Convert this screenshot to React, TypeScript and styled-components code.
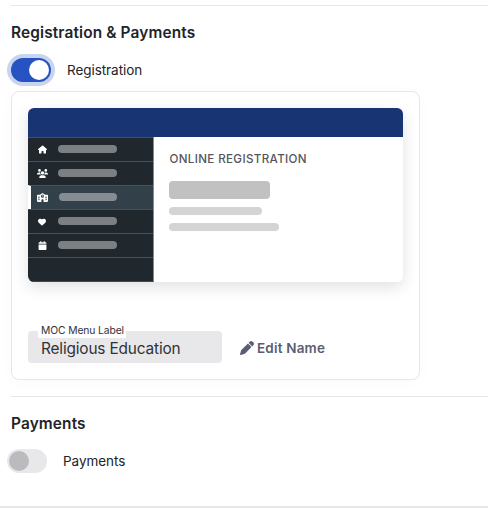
import React from 'react';
import styled, { createGlobalStyle } from 'styled-components';
import { FaHouse, FaUsers, FaSchool, FaHeart, FaCalendar, FaPen } from 'react-icons/fa6';

const GlobalStyle = createGlobalStyle`
  * { box-sizing: border-box; }
  body {
    margin: 0;
    background: #fff;
    color: #212429;
    font-family: Inter, "Liberation Sans", sans-serif;
    overflow: hidden;
  }
`;

const Page = styled.main`
  height: 508px;
  padding-top: 5px;
  overflow: hidden;
  display: flex;
  flex-direction: column;
`;

const Section = styled.section<{ $height: number }>`
  height: ${p => p.$height}px;
  flex: none;
  margin-left: 11px;
  border-top: 1px solid #e7e7e9;
`;

const Heading = styled.h2`
  margin: 16px 0 0;
  font-size: 15.4px;
  line-height: 22px;
  font-weight: 600;
  letter-spacing: 0.14px;
  white-space: nowrap;
`;

const ToggleRow = styled.div<{ $shift?: number }>`
  display: flex;
  align-items: center;
  gap: 16px;
  height: 24px;
  margin: 14px 0 0 ${p => p.$shift ?? 0}px;
`;

const ToggleLabel = styled.span`
  height: 24px;
  font-size: 13.5px;
  line-height: 25px;
  letter-spacing: -0.06px;
`;

const Switch = styled.span<{ $on?: boolean }>`
  display: flex;
  align-items: center;
  justify-content: ${p => (p.$on ? 'flex-end' : 'flex-start')};
  width: 40px;
  height: 24px;
  padding: 2px;
  border-radius: 12px;
  background: ${p => (p.$on ? '#2653c1' : '#e8e8ea')};
  box-shadow: ${p => (p.$on ? '0 0 0 4px #c9d4ef' : 'none')};
`;

const Knob = styled.span<{ $on?: boolean }>`
  width: 20px;
  height: 20px;
  border-radius: 50%;
  background: ${p => (p.$on ? '#fff' : '#bbbbbf')};
`;

const Card = styled.div`
  width: 409px;
  height: 289px;
  margin-top: 9px;
  padding: 16px;
  border: 1px solid #e7e7e9;
  border-radius: 8px;
  background: #fff;
  box-shadow: 0 2px 16px rgba(0, 0, 0, 0.025);
`;

const Preview = styled.div`
  width: 375px;
  height: 174px;
  border-radius: 6px;
  overflow: hidden;
  box-shadow: 0 5px 16px rgba(0, 0, 0, 0.12);
`;

const PreviewHeader = styled.div`
  height: 29px;
  background: #183473;
`;

const PreviewBody = styled.div`
  display: flex;
  height: 145px;
`;

const Sidebar = styled.div`
  width: 126px;
  background: #20282d;
  border-right: 1px solid #868b8e;
  border-bottom: 1px solid #41494d;
`;

const MenuItem = styled.div<{ $active?: boolean }>`
  display: flex;
  align-items: center;
  height: 24px;
  padding-left: ${p => (p.$active ? 5.5 : 8)}px;
  padding-bottom: 1px;
  border-top: 1px solid #485054;
  border-left: ${p => (p.$active ? '3px solid #fff' : '0')};
  background: ${p => (p.$active ? '#324149' : 'transparent')};
  color: #fff;
  &:last-child { height: 25px; padding-bottom: 1px; border-bottom: 1px solid #485054; }
`;

const MenuIcon = styled.span`
  display: flex;
  justify-content: center;
  width: 12px;
  margin: 1px 10px 0 0;
`;

const Placeholder = styled.div<{ $w: number; $h?: number; $color: string; $gap?: number }>`
  width: ${p => p.$w}px;
  height: ${p => p.$h ?? 8}px;
  margin-top: ${p => p.$gap ?? 0}px;
  border-radius: 4px;
  background: ${p => p.$color};
`;

const PreviewContent = styled.div`
  flex: 1;
  padding: 14px 15px 0 15.4px;
  background: #fff;
`;

const PreviewTitle = styled.div`
  height: 16px;
  font-size: 11.6px;
  line-height: 16px;
  font-weight: 500;
  letter-spacing: 0.36px;
  color: #55565a;
  white-space: nowrap;
`;

const FieldRow = styled.div`
  display: flex;
  align-items: center;
  gap: 18px;
  margin-top: 49px;
`;

const Field = styled.div`
  position: relative;
  width: 194px;
  height: 32px;
  padding-left: 13px;
  border-radius: 4px;
  background: #e8e8ea;
  color: #303238;
  font-size: 15.4px;
  line-height: 35px;
  letter-spacing: -0.16px;
`;

const FieldLabel = styled.span`
  position: absolute;
  left: 10px;
  top: -7px;
  width: 88px;
  height: 14px;
  padding-left: 3px;
  background: #fff;
  font-size: 10.3px;
  line-height: 13px;
  letter-spacing: -0.1px;
  white-space: nowrap;
`;

const EditButton = styled.button`
  display: flex;
  align-items: center;
  gap: 3px;
  height: 24px;
  margin: 2px 0 0;
  padding: 0;
  border: 0;
  background: none;
  color: #5a5e73;
  font: 600 13.5px/20px Inter, "Liberation Sans", sans-serif;
  letter-spacing: 0.18px;
`;

const BottomRule = styled.hr`
  width: 100%;
  height: 2px;
  margin: 0;
  flex: none;
  border: 0;
  background: #e7e7e8;
`;

const menu = [
  { Icon: FaHouse, size: 9 },
  { Icon: FaUsers, size: 11 },
  { Icon: FaSchool, size: 11, active: true },
  { Icon: FaHeart, size: 8 },
  { Icon: FaCalendar, size: 9 },
];

export default function App() {
  return (
    <Page>
      <GlobalStyle />
      <Section $height={391}>
        <Heading>Registration &amp; Payments</Heading>
        <ToggleRow>
          <Switch $on><Knob $on /></Switch>
          <ToggleLabel>Registration</ToggleLabel>
        </ToggleRow>
        <Card>
          <Preview>
            <PreviewHeader />
            <PreviewBody>
              <Sidebar>
                {menu.map(({ Icon, size, active }, i) => (
                  <MenuItem key={i} $active={active}>
                    <MenuIcon><Icon size={size} /></MenuIcon>
                    <Placeholder $w={58.5} $color={active ? '#858d92' : '#7c8083'} />
                  </MenuItem>
                ))}
              </Sidebar>
              <PreviewContent>
                <PreviewTitle>ONLINE REGISTRATION</PreviewTitle>
                <Placeholder $w={101} $h={18} $gap={14} $color="#c1c1c1" />
                <Placeholder $w={93} $gap={8} $color="#d4d4d4" />
                <Placeholder $w={110} $gap={8} $color="#d4d4d4" />
              </PreviewContent>
            </PreviewBody>
          </Preview>
          <FieldRow>
            <Field>
              <FieldLabel>MOC Menu Label</FieldLabel>
              Religious Education
            </Field>
            <EditButton type="button"><FaPen size={14} />Edit Name</EditButton>
          </FieldRow>
        </Card>
      </Section>
      <Section $height={110}>
        <Heading>Payments</Heading>
        <ToggleRow $shift={-4}>
          <Switch><Knob /></Switch>
          <ToggleLabel>Payments</ToggleLabel>
        </ToggleRow>
      </Section>
      <BottomRule />
    </Page>
  );
}
